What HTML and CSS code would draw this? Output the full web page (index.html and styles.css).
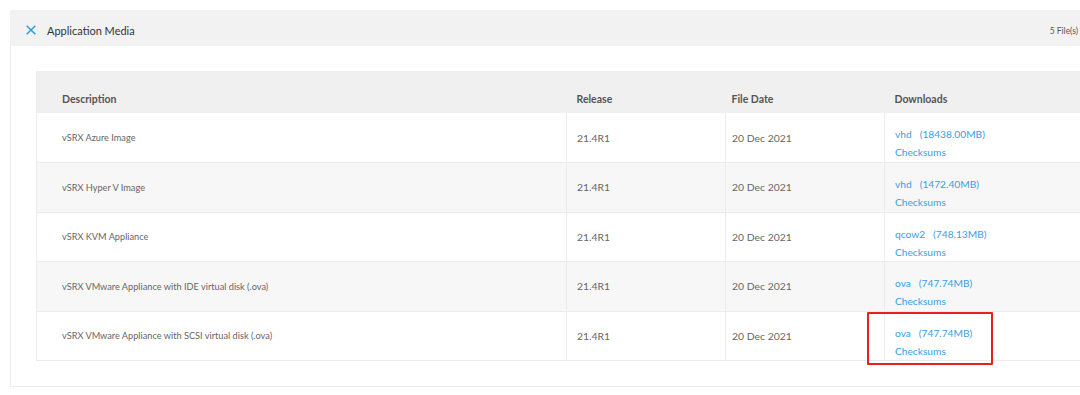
FILE: index.html
```html
<!DOCTYPE html>
<html>
<head>
<meta charset="utf-8">
<link rel="stylesheet" href="styles.css">
</head>
<body>
<section class="panel">
  <header class="panel-head">
    <div class="head-left">
      <svg class="close-icon" width="10" height="10" viewBox="0 0 10 10"><path d="M1.2 1.2 L8.8 8.8 M8.8 1.2 L1.2 8.8" stroke="#2f9be3" stroke-width="1.5" fill="none" stroke-linecap="square"/></svg>
      <span class="title">Application Media</span>
    </div>
    <span class="count">5 File(s)</span>
  </header>
  <div class="panel-body">
    <table class="media">
      <colgroup>
        <col class="c-desc"><col class="c-rel"><col class="c-date"><col class="c-dl">
      </colgroup>
      <thead>
        <tr><th class="desc">Description</th><th class="rel">Release</th><th class="date">File Date</th><th class="dl">Downloads</th></tr>
      </thead>
      <tbody>
        <tr>
          <td class="desc">vSRX Azure Image</td><td class="rel">21.4R1</td><td class="date">20 Dec 2021</td>
          <td class="dl"><a class="link">vhd<span class="size">(18438.00MB)</span></a><a class="link">Checksums</a></td>
        </tr>
        <tr>
          <td class="desc">vSRX Hyper V Image</td><td class="rel">21.4R1</td><td class="date">20 Dec 2021</td>
          <td class="dl"><a class="link">vhd<span class="size">(1472.40MB)</span></a><a class="link">Checksums</a></td>
        </tr>
        <tr>
          <td class="desc">vSRX KVM Appliance</td><td class="rel">21.4R1</td><td class="date">20 Dec 2021</td>
          <td class="dl"><a class="link">qcow2<span class="size">(748.13MB)</span></a><a class="link">Checksums</a></td>
        </tr>
        <tr>
          <td class="desc">vSRX VMware Appliance with IDE virtual disk (.ova)</td><td class="rel">21.4R1</td><td class="date">20 Dec 2021</td>
          <td class="dl"><a class="link">ova<span class="size">(747.74MB)</span></a><a class="link">Checksums</a></td>
        </tr>
        <tr>
          <td class="desc">vSRX VMware Appliance with SCSI virtual disk (.ova)</td><td class="rel">21.4R1</td><td class="date">20 Dec 2021</td>
          <td class="dl highlight-cell"><a class="link">ova<span class="size">(747.74MB)</span></a><a class="link">Checksums</a><span class="highlight"></span></td>
        </tr>
      </tbody>
    </table>
  </div>
</section>
</body>
</html>
```

FILE: styles.css
```css
html, body {
  margin: 0;
  padding: 0;
  background: #ffffff;
  overflow: hidden;
}
body {
  width: 1080px;
  height: 395px;
  font-family: Lato, "Open Sans", sans-serif;
  color: #666;
}
.panel {
  margin: 10px 0 0 10px;
  width: 1090px;
}
.panel-head {
  height: 36px;
  background: #f2f2f2;
  display: flex;
  align-items: center;
  justify-content: space-between;
  padding: 5px 22px 0 16px;
  box-sizing: border-box;
}
.head-left {
  display: flex;
  align-items: center;
}
.close-icon {
  display: block;
  margin-top: -1px;
}
.title {
  margin-left: 11px;
  font-size: 11px;
  color: #333;
}
.count {
  font-size: 8.5px;
  color: #555;
}
.panel-body {
  border-left: 1px solid #ececec;
  border-bottom: 1px solid #ececec;
  padding: 25px 0 25px 25px;
}
.media {
  border-collapse: collapse;
  table-layout: fixed;
  width: 1060px;
  border-left: 1px solid #ececec;
  border-bottom: 1px solid #ececec;
}
.c-desc { width: 530px; }
.c-rel { width: 159px; }
.c-date { width: 159px; }
.c-dl { width: 212px; }
.media th {
  background: #f0f0f0;
  height: 42px;
  padding: 14px 0 0 0;
  box-sizing: border-box;
  text-align: left;
  font-size: 10.5px;
  font-weight: 700;
  color: #555;
}
.media td {
  height: 49.5px;
  padding: 0;
  box-sizing: border-box;
  font-size: 10.4px;
  color: #666;
  vertical-align: middle;
  border-top: 1px solid #ececec;
}
.media tbody tr:first-child td { border-top: none; }
.media tbody tr:nth-child(even) td { background: #f7f7f7; }
.media td + td { border-left: 1px solid #ececec; }
.media .desc { padding-left: 25px; }
.media td.desc { font-size: 9.2px; }
.media .rel { padding-left: 10px; }
.media .date { padding-left: 6px; }
.media .dl { padding-left: 10px; }
.media td.dl {
  vertical-align: top;
  padding-top: 12px;
}
.link {
  display: block;
  color: #3a9ee4;
  font-size: 10.2px;
  line-height: 18px;
  text-decoration: none;
}
.size { margin-left: 8px; }
.highlight-cell { position: relative; }
.highlight {
  position: absolute;
  left: -18px;
  top: 0;
  width: 122px;
  height: 49px;
  border: 2px solid #e8211e;
  border-radius: 1px;
}
```
